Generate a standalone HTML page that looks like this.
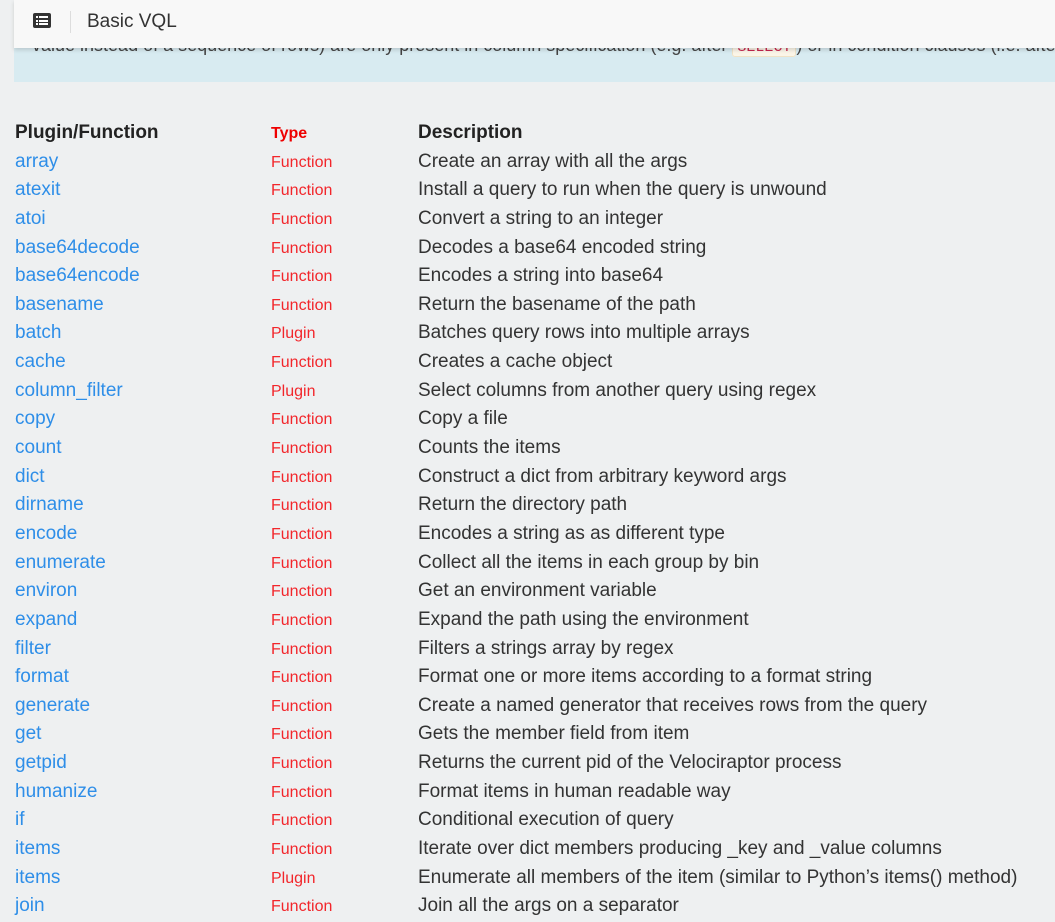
<!DOCTYPE html>
<html><head><meta charset="utf-8"><style>
*{margin:0;padding:0;box-sizing:border-box}
body{width:1055px;height:920px;overflow:hidden;background:#eef0f1;font-family:"Liberation Sans",Arial,sans-serif;position:relative}
.alert{position:absolute;left:14px;top:0;width:1041px;height:82px;background:#d8ebf1;overflow:hidden}
.alert p{position:absolute;left:18px;top:35px;white-space:nowrap;font-size:18px;color:#444}
.alert code{background:#fbf5e8;border:1px solid #f0e2c6;color:#c7254e;padding:0 4px;border-radius:3px;font-family:"Liberation Mono",monospace;font-size:15px}
.hdr{position:absolute;left:14px;top:0;width:1041px;height:48px;background:#f8f8f8;box-shadow:0 2px 4px rgba(0,0,0,.15);z-index:2}
.ico{position:absolute;left:19px;top:13px;width:18px;height:15px;background:#333;border-radius:2px}
.ico i{position:absolute;left:6px;width:9px;height:2px;background:#fff}
.ico b{position:absolute;left:3px;width:2px;height:2px;background:#fff}
.div{position:absolute;left:56px;top:11px;width:1px;height:22px;background:#ddd}
.ttl{position:absolute;left:73px;top:11px;font-size:19px;color:#333}
.t{position:absolute;left:15px;top:119px;width:1040px}
.r{height:28.65px;line-height:28.65px;white-space:nowrap;font-size:19px;color:#333;position:relative}
.r span{position:absolute;top:0}
.a{left:0;color:#2e8ee8}
.b{left:256px;color:#f2262b;font-size:16px;font-weight:300;top:1px!important}
.c{left:403px}
.h span{font-weight:bold;color:#222}
.h .b{color:#e00;font-size:16px}
</style></head><body>
<div class="alert"><p>value instead of a sequence of rows) are only present in column specification (e.g. after <code>SELECT</code>) or in condition clauses (i.e. after WHERE)</p></div>
<div class="hdr"><div class="ico"><b style="top:3px"></b><i style="top:3px"></i><b style="top:6.5px"></b><i style="top:6.5px"></i><b style="top:10px"></b><i style="top:10px"></i></div><div class="div"></div><div class="ttl">Basic VQL</div></div>
<div class="t">
<div class="r h"><span class="a">Plugin/Function</span><span class="b">Type</span><span class="c">Description</span></div>
<div class="r"><span class="a">array</span><span class="b">Function</span><span class="c">Create an array with all the args</span></div>
<div class="r"><span class="a">atexit</span><span class="b">Function</span><span class="c">Install a query to run when the query is unwound</span></div>
<div class="r"><span class="a">atoi</span><span class="b">Function</span><span class="c">Convert a string to an integer</span></div>
<div class="r"><span class="a">base64decode</span><span class="b">Function</span><span class="c">Decodes a base64 encoded string</span></div>
<div class="r"><span class="a">base64encode</span><span class="b">Function</span><span class="c">Encodes a string into base64</span></div>
<div class="r"><span class="a">basename</span><span class="b">Function</span><span class="c">Return the basename of the path</span></div>
<div class="r"><span class="a">batch</span><span class="b">Plugin</span><span class="c">Batches query rows into multiple arrays</span></div>
<div class="r"><span class="a">cache</span><span class="b">Function</span><span class="c">Creates a cache object</span></div>
<div class="r"><span class="a">column_filter</span><span class="b">Plugin</span><span class="c">Select columns from another query using regex</span></div>
<div class="r"><span class="a">copy</span><span class="b">Function</span><span class="c">Copy a file</span></div>
<div class="r"><span class="a">count</span><span class="b">Function</span><span class="c">Counts the items</span></div>
<div class="r"><span class="a">dict</span><span class="b">Function</span><span class="c">Construct a dict from arbitrary keyword args</span></div>
<div class="r"><span class="a">dirname</span><span class="b">Function</span><span class="c">Return the directory path</span></div>
<div class="r"><span class="a">encode</span><span class="b">Function</span><span class="c">Encodes a string as as different type</span></div>
<div class="r"><span class="a">enumerate</span><span class="b">Function</span><span class="c">Collect all the items in each group by bin</span></div>
<div class="r"><span class="a">environ</span><span class="b">Function</span><span class="c">Get an environment variable</span></div>
<div class="r"><span class="a">expand</span><span class="b">Function</span><span class="c">Expand the path using the environment</span></div>
<div class="r"><span class="a">filter</span><span class="b">Function</span><span class="c">Filters a strings array by regex</span></div>
<div class="r"><span class="a">format</span><span class="b">Function</span><span class="c">Format one or more items according to a format string</span></div>
<div class="r"><span class="a">generate</span><span class="b">Function</span><span class="c">Create a named generator that receives rows from the query</span></div>
<div class="r"><span class="a">get</span><span class="b">Function</span><span class="c">Gets the member field from item</span></div>
<div class="r"><span class="a">getpid</span><span class="b">Function</span><span class="c">Returns the current pid of the Velociraptor process</span></div>
<div class="r"><span class="a">humanize</span><span class="b">Function</span><span class="c">Format items in human readable way</span></div>
<div class="r"><span class="a">if</span><span class="b">Function</span><span class="c">Conditional execution of query</span></div>
<div class="r"><span class="a">items</span><span class="b">Function</span><span class="c">Iterate over dict members producing _key and _value columns</span></div>
<div class="r"><span class="a">items</span><span class="b">Plugin</span><span class="c">Enumerate all members of the item (similar to Python’s items() method)</span></div>
<div class="r"><span class="a">join</span><span class="b">Function</span><span class="c">Join all the args on a separator</span></div>
</div>
</body></html>
